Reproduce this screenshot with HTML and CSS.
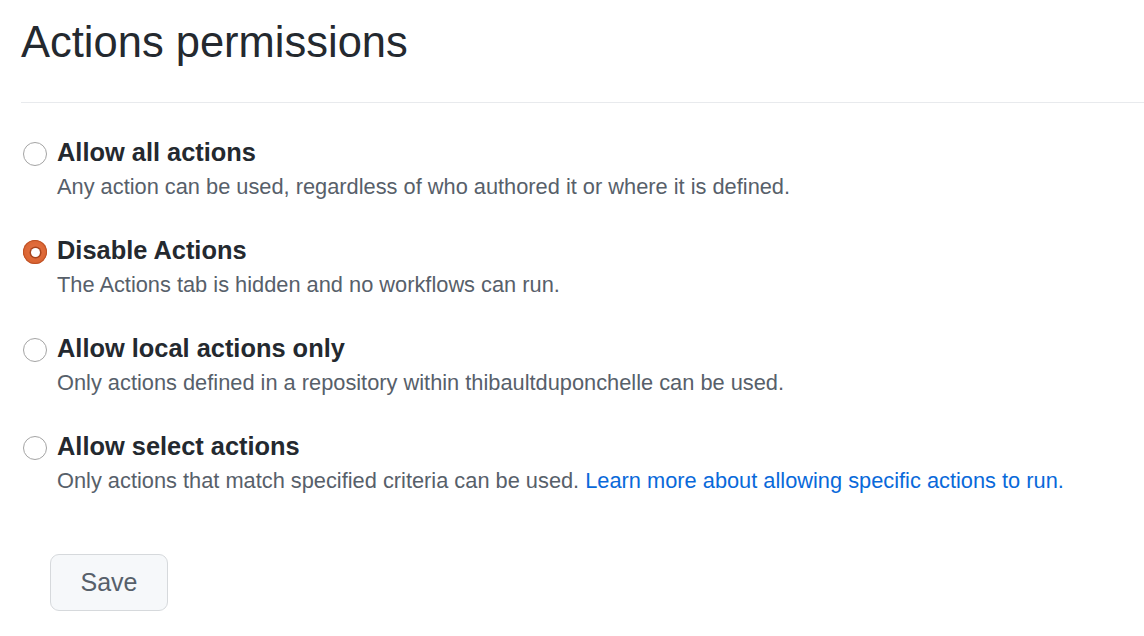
FILE: index.html
```html
<!DOCTYPE html>
<html>
<head>
<meta charset="utf-8">
<link rel="stylesheet" href="styles.css">
</head>
<body>
<div class="page">
  <h2 class="title">Actions permissions</h2>
  <div class="options">
    <div class="option">
      <span class="radio"></span>
      <div class="text">
        <div class="label">Allow all actions</div>
        <div class="note">Any action can be used, regardless of who authored it or where it is defined.</div>
      </div>
    </div>
    <div class="option">
      <span class="radio checked"></span>
      <div class="text">
        <div class="label">Disable Actions</div>
        <div class="note">The Actions tab is hidden and no workflows can run.</div>
      </div>
    </div>
    <div class="option">
      <span class="radio"></span>
      <div class="text">
        <div class="label">Allow local actions only</div>
        <div class="note">Only actions defined in a repository within thibaultduponchelle can be used.</div>
      </div>
    </div>
    <div class="option">
      <span class="radio"></span>
      <div class="text">
        <div class="label">Allow select actions</div>
        <div class="note">Only actions that match specified criteria can be used. <a class="link" href="#">Learn more about allowing specific actions to run.</a></div>
      </div>
    </div>
  </div>
  <button class="save">Save</button>
</div>
</body>
</html>
```
FILE: styles.css
```css
html, body {
  margin: 0;
  padding: 0;
  background: #ffffff;
}
body {
  font-family: "Liberation Sans", Arial, sans-serif;
  color: #24292f;
}
.page {
  padding: 16px 0 0 21px;
}
.title {
  margin: 0;
  font-size: 43.5px;
  font-weight: 400;
  line-height: 52px;
  padding-bottom: 34px;
  border-bottom: 1px solid #e8eaed;
}
.options {
  display: flex;
  flex-direction: column;
  gap: 33px;
  padding-top: 34px;
}
.option {
  display: flex;
  align-items: flex-start;
  gap: 10px;
}
.radio {
  flex: none;
  width: 24px;
  height: 24px;
  box-sizing: border-box;
  border-radius: 50%;
  border: 1.5px solid #a4a4a4;
  background: #fff;
  margin: 5px 0 0 2px;
  position: relative;
}
.radio.checked {
  border: none;
  background: radial-gradient(circle at 50% 45%, #e57446 0%, #db6634 60%, #c9552a 100%);
  box-shadow: inset 0 0 0 1px #bf5226;
}
.radio.checked::after {
  content: "";
  position: absolute;
  left: 50%;
  top: 50%;
  width: 9px;
  height: 9px;
  margin: -4.5px 0 0 -4.5px;
  border-radius: 50%;
  background: #fff;
  box-shadow: 0 0 0 1.5px #a9441c;
}
.label {
  font-size: 25.4px;
  font-weight: 700;
  line-height: 30px;
}
.note {
  font-size: 21.8px;
  line-height: 30px;
  color: #57606a;
  margin-top: 5px;
}
.link {
  color: #0969da;
  text-decoration: none;
}
.save {
  margin: 58px 0 0 29px;
  width: 118px;
  height: 57px;
  font-family: "Liberation Sans", Arial, sans-serif;
  font-size: 25px;
  color: #57606a;
  background: #f6f8fa;
  border: 1px solid #d6d9dc;
  border-radius: 9px;
}
```
